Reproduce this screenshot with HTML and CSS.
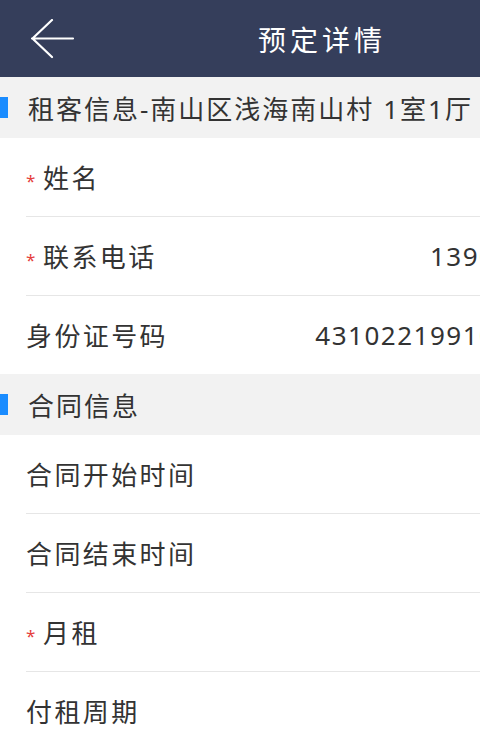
FILE: index.html
```html
<!DOCTYPE html>
<html lang="zh-CN">
<head>
<meta charset="utf-8">
<title>预定详情</title>
<link rel="stylesheet" href="styles.css">
</head>
<body>
<div class="page">
  <header class="topbar">
    <span class="back">
      <svg width="46" height="40" viewBox="0 0 46 40"><path d="M44 19.5H3 M23 1L3.5 19.5L23 38" fill="none" stroke="#fff" stroke-width="2.2" stroke-linecap="round" stroke-linejoin="round"/></svg>
    </span>
    <h1 class="title">预定详情</h1>
    <span class="spacer"></span>
  </header>

  <div class="section">租客信息-南山区浅海南山村 1室1厅</div>
  <div class="list">
    <div class="row"><span class="label"><i class="req">*</i>姓名</span></div>
    <div class="row"><span class="label"><i class="req">*</i>联系电话</span><span class="value">13900000000</span></div>
    <div class="row"><span class="label">身份证号码</span><span class="value">431022199101011234</span></div>
  </div>

  <div class="section">合同信息</div>
  <div class="list">
    <div class="row"><span class="label">合同开始时间</span></div>
    <div class="row"><span class="label">合同结束时间</span></div>
    <div class="row"><span class="label"><i class="req">*</i>月租</span></div>
    <div class="row"><span class="label">付租周期</span></div>
  </div>
</div>
</body>
</html>
```
FILE: styles.css
```css
html, body {
  margin: 0;
  padding: 0;
  background: #fff;
  overflow: hidden;
}
body {
  font-family: "Noto Sans", "Noto Sans CJK SC", sans-serif;
  color: #333;
  width: 480px;
  height: 745px;
}
.page {
  width: 640px;
}
.topbar {
  height: 77px;
  background: #353e5b;
  display: grid;
  grid-template-columns: 1fr auto 1fr;
  align-items: center;
}
.back {
  display: flex;
  padding-left: 29px;
}
.title {
  margin: 0;
  font-weight: normal;
  font-size: 28px;
  letter-spacing: 4px;
  padding-left: 4px;
  color: #fff;
  white-space: nowrap;
}
.section {
  height: 61px;
  background: #f2f2f2;
  display: flex;
  align-items: center;
  padding-left: 28px;
  font-size: 26px;
  letter-spacing: 2px;
  color: #333;
  position: relative;
  white-space: nowrap;
}
.section::before {
  content: "";
  position: absolute;
  left: 0;
  top: 20px;
  width: 8px;
  height: 21px;
  background: #1a8cff;
}
.list {
  padding-left: 26px;
  background: #fff;
}
.row {
  height: 78px;
  border-bottom: 1px solid #e6e6e6;
  display: flex;
  align-items: center;
  font-size: 26px;
  padding-right: 30px;
  white-space: nowrap;
}
.list .row:last-child {
  border-bottom: none;
}
.label {
  letter-spacing: 2.4px;
  display: flex;
  align-items: center;
}
.req {
  font-style: normal;
  color: #e5403c;
  font-size: 17px;
  width: 17px;
  margin-top: 6px;
  letter-spacing: 0;
}
.value {
  margin-left: auto;
  letter-spacing: 1.5px;
  font-size: 26px;
}
```
